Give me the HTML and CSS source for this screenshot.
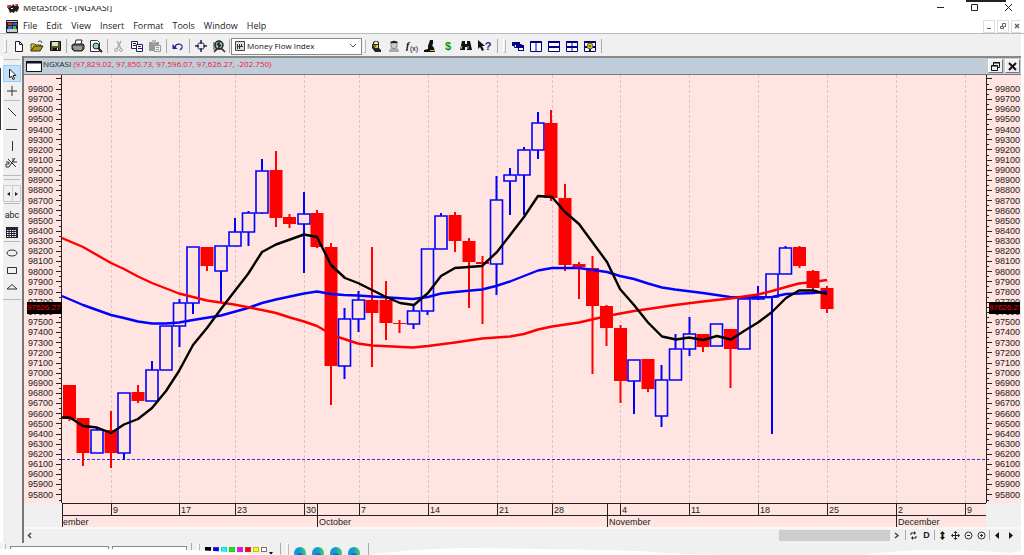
FILE: index.html
```html
<!DOCTYPE html>
<html lang="en">
<head>
<meta charset="utf-8">
<title>MetaStock - [NGXASI]</title>
<link rel="stylesheet" href="styles.css">
</head>
<body>
<div class="app">
  <header class="titlebar">
    <svg class="app-icon" width="12" height="11" viewBox="0 0 12 11"><path d="M0 4l3-2 2 1 1-2 2 2 3-1 1 3-2 4-2-1-1 2-2-1-2 1-1-3z" fill="#1d1d1d"/><path d="M0 2h3l1 2-3 1zM8 1h3v2H9z" fill="#d33"/><path d="M4 5h2v1H4z" fill="#eee"/></svg>
    <h1 class="title"><span>MetaStock - [NGXASI]</span></h1>
    <div class="window-buttons">
      <button aria-label="Minimize"><svg width="9" height="9"><path d="M1 4.500h7" stroke="#222"/></svg></button>
      <button aria-label="Maximize"><svg width="9" height="9"><path d="M1.500 1.500h6v6h-6z" fill="none" stroke="#222"/></svg></button>
      <button aria-label="Close"><svg width="9" height="9"><path d="M1 1l7 7M8 1l-7 7" stroke="#222"/></svg></button>
    </div>
  </header>
  <nav class="menubar">
    <svg class="doc-icon" width="12" height="13" viewBox="0 0 12 13"><path d="M.5.5h11v12H.5z" fill="#ccc" stroke="#222"/><path d="M1 2h10v7H1z" fill="#223"/><path d="M2 3h4v2H2z" fill="#d33"/><path d="M7 3h4v2H7z" fill="#35f"/><path d="M2 6h4v3H2z" fill="#36d"/><path d="M7 6h3v3H7z" fill="#3b3"/></svg>
    <a href="#">File</a><a href="#">Edit</a><a href="#">View</a><a href="#">Insert</a><a href="#">Format</a><a href="#">Tools</a><a href="#">Window</a><a href="#">Help</a>
    <div class="child-buttons">
      <button aria-label="Minimize chart"><svg width="10" height="10"><path d="M3 7.500h4" stroke="#567" stroke-width="1"/></svg></button>
      <button aria-label="Restore chart"><svg width="10" height="10"><path d="M2.500 5.500h3v2h-3zM4.500 5V2.500h3v3H6" fill="none" stroke="#567"/></svg></button>
      <button class="cut" aria-label="Close chart"><svg width="10" height="10"><path d="M3 3l4 4M7 3L3 7" stroke="#567" stroke-width="1.500"/></svg></button>
    </div>
  </nav>
  <div class="toolbar" role="toolbar" aria-label="Standard">
    <i class="grip"></i>
    <button aria-label="New"><svg width="14" height="14"><path d="M3.500 2.500h4l3 3v7h-7zM7.500 2.500v3h3" fill="#fff" stroke="#222"/></svg></button>
    <button aria-label="Open"><svg width="14" height="14"><path d="M1 5h4l1 1h5v2H5l-4 4z" fill="#e8d820" stroke="#443"/><path d="M1 12l3-5h9l-3 5z" fill="#a8960f" stroke="#332"/><path d="M8 3c2-2 3-1 4 1" fill="none" stroke="#222"/></svg></button>
    <button aria-label="Save"><svg width="14" height="14"><path d="M2.500 2.500h10v9h-10z" fill="#55551c" stroke="#111"/><path d="M4 3h6v4H4z" fill="#ddd"/><path d="M5 9h6v3H5z" fill="#111"/><path d="M9 9h1v2H9z" fill="#eee"/></svg></button>
    <i class="sep"></i>
    <button aria-label="Print"><svg width="14" height="14"><path d="M4 5l1-4h6l-1 4" fill="#fff" stroke="#222"/><path d="M1 6l2-1h9l1 1v4l-2 2H3l-2-2z" fill="#555" stroke="#222"/><path d="M2 8h9M3 10h7" stroke="#ddd"/><path d="M9 10h2" stroke="#cc2"/></svg></button>
    <button aria-label="Print preview"><svg width="14" height="14"><path d="M1.500 1.500h7l2 2v9h-9z" fill="#fff" stroke="#333"/><circle cx="7" cy="7" r="3" fill="#9cc" stroke="#222"/><path d="M9 9l4 4" stroke="#222" stroke-width="2"/></svg></button>
    <i class="sep"></i>
    <button aria-label="Cut" disabled><svg width="14" height="14"><path d="M5 2l4 8M9 2L5 10" stroke="#aaa" stroke-width="1.500"/><circle cx="4" cy="11" r="1.500" fill="none" stroke="#aaa"/><circle cx="9" cy="11" r="1.500" fill="none" stroke="#aaa"/></svg></button>
    <button aria-label="Copy"><svg width="14" height="14"><path d="M1.500 2.500h6v7h-6z" fill="#fff" stroke="#224"/><path d="M3 4.500h3M3 6.500h3" stroke="#224"/><path d="M6.500 5.500h6v7h-6z" fill="#fff" stroke="#226"/><path d="M8 7.500h3M8 9.500h4" stroke="#224"/></svg></button>
    <button aria-label="Paste" disabled><svg width="14" height="14"><path d="M1 3h10v9H1z" fill="#999"/><path d="M4 1h4v3H4z" fill="#bbb"/><path d="M6.500 6.500h6v6h-6z" fill="#eee" stroke="#999"/><path d="M8 8.500h3M8 10.500h3" stroke="#999"/></svg></button>
    <i class="sep"></i>
    <button aria-label="Undo"><svg width="14" height="14"><path d="M4 8c1-4 8-4 7 1l-2 2" fill="none" stroke="#229" stroke-width="1.200"/><path d="M1.500 5v5h5z" fill="#229"/></svg></button>
    <i class="sep"></i>
    <button aria-label="Crosshair"><svg width="14" height="14"><circle cx="7" cy="7" r="3.500" fill="none" stroke="#225"/><path d="M7 1v4M7 9v4M1 7h4M9 7h4" stroke="#225" stroke-width="1.500"/></svg></button>
    <button aria-label="Zoom chart"><svg width="14" height="14"><path d="M1 3h9v8H1z" fill="#999"/><circle cx="7" cy="6" r="4" fill="#9bb" stroke="#222" stroke-width="1.500"/><path d="M5 6l2-2v4l2-2M9 9l4 4M2 13l3-3" fill="none" stroke="#222" stroke-width="1.500"/></svg></button>
    <i class="sep thin"></i>
    <div class="picker">
      <svg width="10" height="10"><path d="M.5.5h9v9h-9z" fill="#ddd" stroke="#444"/><path d="M2.500 3v5M4.500 3v5M6.500 3v3M2 5.500h6" stroke="#333"/></svg>
      <label class="sr" for="indicator">Indicator</label>
      <select id="indicator"><option>Money Flow Index</option></select>
      <svg class="chevron" width="8" height="6"><path d="M1 1l3 3 3-3" fill="none" stroke="#555"/></svg>
    </div>
    <i class="grip tight"></i>
    <button aria-label="Explorer"><svg width="14" height="14"><path d="M4 4c0-3 6-3 6 0v5l2 2v2H6L3 9V6z" fill="#222"/><path d="M5 4c1-2 3-2 4 0v1H5z" fill="#eee"/><path d="M4 6h5v3H6z" fill="#dc2"/><path d="M5 7h2" stroke="#222"/></svg></button>
    <button aria-label="Expert advisor"><svg width="14" height="14"><path d="M2 13c0-4 2-4 5-4s5 0 5 4z" fill="#aaa"/><path d="M4 4h6v4l-3 2-3-2z" fill="#ccc" stroke="#888"/><path d="M3 4c1-3 7-3 8 0z" fill="#223"/></svg></button>
    <button aria-label="Indicator builder"><svg width="14" height="14"><text x="1" y="10" class="fx">f</text><text x="5" y="12" class="fx-sub">(x)</text></svg></button>
    <button aria-label="System tester"><svg width="14" height="14"><path d="M7 1h3v4l-1 1 2 3 1 4H1v-2l4-1V7z" fill="#111"/><path d="M7 11h5v1H7z" fill="#db2"/></svg></button>
    <button class="dollar" aria-label="Option scope">$</button>
    <button aria-label="Find"><svg width="14" height="14"><path d="M3 2h3v3h2V2h3l2 9H8V8H6v3H1z" fill="#111"/><path d="M3 7l-1 3M9 7v3" stroke="#aaa"/></svg></button>
    <button class="help" aria-label="Help pointer"><svg width="8" height="14"><path d="M1 1v9l2-2 2 4 2-1-2-4h3z" fill="#111"/></svg>?</button>
    <i class="space"></i>
    <i class="sep"></i>
    <i class="grip"></i>
    <button aria-label="Cascade"><svg width="14" height="14"><path d="M1 3h8v4H1z" fill="#008"/><path d="M3.500 5.500h7v3h-7z" fill="#fff" stroke="#008"/><path d="M5 6h8v6H7V9H5z" fill="#008"/><path d="M8 9h4v2H8z" fill="#fff"/></svg></button>
    <button aria-label="Tile vertically"><svg width="14" height="14"><path d="M1.500 2.500h11v10h-11zM7 3v9" fill="#fff" stroke="#008"/><path d="M1 3h12" stroke="#008" stroke-width="2"/></svg></button>
    <button aria-label="Tile horizontally"><svg width="14" height="14"><path d="M1.500 2.500h11v10h-11z" fill="#fff" stroke="#008"/><path d="M1 3h12M1 8h12" stroke="#008" stroke-width="2"/></svg></button>
    <button aria-label="Tile"><svg width="14" height="14"><path d="M1.500 2.500h11v10h-11zM7 3v9" fill="#fff" stroke="#008"/><path d="M1 3h12M1 8h12" stroke="#008" stroke-width="2"/></svg></button>
    <button aria-label="Layout options"><svg width="14" height="14"><path d="M1.500 2.500h11v10h-11z" fill="#fff" stroke="#008"/><path d="M1 3h12M1 8h12M7 3v9" stroke="#008" stroke-width="2"/><circle cx="7" cy="7" r="3" fill="#cc0" stroke="#660"/><circle cx="7" cy="7" r="1" fill="#553"/></svg></button>
    <i class="sep"></i>
  </div>

  <div class="workspace">
    <aside class="tools" role="toolbar" aria-label="Drawing tools">
      <i class="hr top"></i>
      <button class="active" aria-label="Select"><svg width="14" height="14"><path d="M4.500 2v9l2-2 1.500 3.500 1.500-.7L8 8.500h3z" fill="#fff" stroke="#222"/></svg></button>
      <button aria-label="Cross"><svg width="14" height="14"><path d="M7 2v10M2 7h10" stroke="#333"/></svg></button>
      <i class="hr"></i>
      <button aria-label="Trend line"><svg width="14" height="14"><path d="M3 3l8 8" stroke="#333"/></svg></button>
      <button aria-label="Horizontal line"><svg width="14" height="14"><path d="M1 7.500h11" stroke="#333"/></svg></button>
      <button aria-label="Vertical line"><svg width="14" height="14"><path d="M7.500 2v10" stroke="#333"/></svg></button>
      <button aria-label="Line studies"><svg width="14" height="14"><path d="M3 3l8 8M10 2L4 11M1 6h3v2H1v3h3M8 2v4h4" fill="none" stroke="#333"/></svg></button>
      <i class="hr wide"></i>
      <i class="hr top"></i>
      <div class="nav-pair"><button aria-label="Previous"><svg width="7" height="12"><path d="M5 4v4L2 6z" fill="#222"/></svg></button><button aria-label="Next"><svg width="7" height="12"><path d="M2 4v4l3-2z" fill="#222"/></svg></button></div>
      <i class="hr"></i>
      <button class="abc" aria-label="Text">abc</button>
      <button aria-label="Grid"><svg width="14" height="14"><path d="M1 2h12v11H1z" fill="#223"/><path d="M2 5.500h10M2 7.500h10M2 9.500h10M2 11.500h10" stroke="#fff" stroke-dasharray="1.500 1"/></svg></button>
      <i class="hr"></i>
      <button aria-label="Ellipse"><svg width="14" height="14"><ellipse cx="7" cy="7" rx="5" ry="3" fill="none" stroke="#333"/></svg></button>
      <button aria-label="Rectangle"><svg width="14" height="14"><path d="M2.500 4.500h9v6h-9z" fill="none" stroke="#333"/></svg></button>
      <button aria-label="Triangle"><svg width="14" height="14"><path d="M7 4.500l5 4.500H2z" fill="none" stroke="#333"/></svg></button>
      <i class="hr wide"></i>
    </aside>

    <main class="chart-window">
      <div class="chart-title">
        <svg width="16" height="11"><path d="M.5.5h15v10H.5z" fill="#fff" stroke="#111"/><path d="M0 1.500h16" stroke="#111" stroke-width="2"/></svg>
        <span>NGXASI <b>(97,829.02, 97,850.73, 97,596.07, 97,626.27, -202.750)</b></span>
        <div class="chart-buttons">
          <button aria-label="Restore"><svg width="11" height="11"><path d="M3.500 4V1.500h6v5H8M1.500 4.500h6v5h-6z" fill="none" stroke="#111"/><path d="M3 2h7M1 5h7" stroke="#111" stroke-width="1"/></svg></button>
          <button aria-label="Close"><svg width="11" height="11"><path d="M2 2l7 7M9 2L2 9" stroke="#111" stroke-width="2"/></svg></button>
        </div>
      </div>
      <div class="chart">
        <div class="axis left">
          <ol class="prices"></ol>
          <svg class="ticks" viewBox="0 0 7 428" preserveAspectRatio="none"></svg>
          <output class="last-price">97626.27</output>
        </div>
        <svg class="plot" viewBox="62 75 924 428" preserveAspectRatio="none" role="img" aria-label="NGXASI daily candlesticks with three moving averages"></svg>
        <div class="axis right">
          <svg class="ticks" viewBox="0 0 7 428" preserveAspectRatio="none"></svg>
          <ol class="prices"></ol>
          <output class="last-price">97626.27</output>
        </div>
      </div>
      <div class="dates">
        <div class="days"><span></span><span>9</span><span>17</span><span>23</span><span>30</span><span></span><span>7</span><span>14</span><span>21</span><span>28</span><span></span><span>4</span><span>11</span><span>18</span><span>25</span><span>2</span><span>9</span></div>
        <div class="months"><span>ember</span><span>October</span><span>November</span><span>December</span></div>
      </div>
      <div class="scroller">
        <button class="back" aria-label="Scroll left"><svg width="7" height="9"><path d="M5 2L2.500 4.500 5 7" fill="none" stroke="#444" stroke-width="1.500"/></svg></button>
        <div class="track"><div class="thumb"></div></div>
        <button aria-label="Scroll right"><svg width="9" height="9"><path d="M2 2l3 2.500L2 7" fill="none" stroke="#444" stroke-width="1.500"/></svg></button>
        <i class="sep"></i>
        <button aria-label="Refresh"><svg width="9" height="9"><path d="M2 4V2h4M7 5v2H3" fill="none" stroke="#222"/><path d="M5 0v4l2-2zM4 5v4L2 7z" fill="#222"/></svg></button>
        <button class="period" aria-label="Daily">D</button>
        <i class="sep"></i>
        <button aria-label="Fit vertically"><svg width="9" height="9"><path d="M4.500 0L7 3H5.500v3H7L4.500 9 2 6h1.500V3H2z" fill="#111"/></svg></button>
        <button aria-label="Move"><svg width="9" height="9"><path d="M4.500 1v7M1 4.500h7" stroke="#222"/><path d="M4.500 0l2 2h-4zM4.500 9l2-2h-4zM0 4.500l2-2v4zM9 4.500l-2-2v4z" fill="#222"/></svg></button>
        <button aria-label="Zoom out"><svg width="9" height="9"><circle cx="4.500" cy="4.500" r="3.500" fill="none" stroke="#333"/><path d="M3 4.500h3" stroke="#222"/></svg></button>
        <button aria-label="Zoom in"><svg width="9" height="9"><circle cx="4.500" cy="4.500" r="3.500" fill="none" stroke="#333"/><path d="M3 4.500h3M4.500 3v3" stroke="#222"/></svg></button>
        <i class="sep"></i>
        <button aria-label="Previous security"><svg width="9" height="9"><path d="M6 1v7L2 4.500z" fill="#111"/></svg></button>
        <button aria-label="Next security"><svg width="9" height="9"><path d="M3 1v7l4-3.500z" fill="#111"/></svg></button>
      </div>
    </main>
  </div>

  <footer class="bottombar">
    <i class="grip"></i>
    <input class="wide" aria-label="Symbol"><input aria-label="Line style">
    <i class="sep"></i><i class="grip"></i>
    <div class="swatches">
      <button class="black" aria-label="Black"></button><button class="blue" aria-label="Blue"></button><button class="cyan" aria-label="Cyan"></button><button class="green" aria-label="Green"></button><button class="magenta" aria-label="Magenta"></button><button class="red" aria-label="Red"></button><button class="yellow" aria-label="Yellow"></button><button class="white" aria-label="White"></button>
    </div>
    <svg class="more" width="4" height="3"><path d="M0 0h4L2 3z" fill="#111"/></svg>
    <i class="sep"></i><i class="grip"></i>
    <div class="links"><a href="#" aria-label="Web link 1"></a><a href="#" aria-label="Web link 2"></a><a href="#" aria-label="Web link 3"></a><a href="#" aria-label="Web link 4"></a></div>
    <i class="sep"></i>
    <svg class="torn" viewBox="0 0 1024 12" preserveAspectRatio="none"><path d="M0 6H150Q220 7 250 11L300 12H370Q410 6 470 5Q560 6 640 8Q690 12 740 12H866Q880 9 925 7Q980 7 1014 10L1024 8V12H0z" fill="#fff"/></svg>
  </footer>
</div>
<script src="chart.js"></script>
</body>
</html>
```

FILE: styles.css
```css
* { box-sizing: border-box; }

body {
  margin: 0;
  background: #fff;
  color: #222;
  font: 9px/12px "Open Sans", "Noto Sans", sans-serif;
}

button {
  display: flex;
  align-items: center;
  justify-content: center;
  padding: 0;
  border: 0;
  background: none;
  color: inherit;
  font: inherit;
}

svg { display: block; flex: none; }

.app {
  display: flex;
  flex-direction: column;
  height: 100vh;
  overflow: hidden;
}

/* title and menu */
.titlebar {
  display: flex;
  flex: none;
  align-items: flex-start;
  height: 17px;
  padding-left: 7px;
  background: linear-gradient(#222, #222) right 18px top 0 / 40px 2px no-repeat;
}
.app-icon { margin-top: 3px; }
.title {
  display: flex;
  align-items: flex-end;
  height: 8px;
  margin: 6px 0 0 4px;
  overflow: hidden;
  font-size: 9px;
  font-weight: 400;
  line-height: 12px;
}
.window-buttons {
  display: flex;
  gap: 25px;
  margin: 0 11px 0 auto;
}
.window-buttons button { padding-top: 3px; }
.menubar {
  display: flex;
  flex: none;
  align-items: center;
  gap: 9px;
  height: 17px;
  padding: 2px 3px 0 6px;
  border-bottom: 1px solid #bbb;
}
.doc-icon { margin-right: -4px; }
.menubar a { color: #222; text-decoration: none; }
.child-buttons { display: flex; gap: 2px; margin-left: auto; }
.child-buttons button { width: 12px; height: 13px; border: 1px solid #ddd; overflow: hidden; }
.child-buttons .cut { width: 10px; border-right: 0; }

/* toolbar */
.toolbar {
  display: flex;
  flex: none;
  align-items: center;
  height: 22px;
  margin-right: 3px;
  padding: 2px 0 0 1px;
  background: #f0f0f0;
}
.toolbar button { width: 18px; height: 18px; flex: none; }
.grip {
  flex: none;
  width: 3px;
  height: 14px;
  margin: 0 3px;
  border: 1px solid;
  border-color: #fff #bbb #bbb #fff;
}
.grip.tight { margin: 0 1px; }
.sep { flex: none; width: 1px; height: 14px; margin: 0 2px; background: #aaa; }
.sep.thin { margin: 0 1px; }
.space { width: 2px; }
.picker {
  display: flex;
  align-items: center;
  gap: 2px;
  width: 131px;
  height: 17px;
  padding: 0 4px 0 3px;
  border: 1px solid #888;
  background: #fff;
}
.picker select {
  flex: 1;
  min-width: 0;
  height: 12px;
  padding: 0;
  border: 0;
  appearance: none;
  background: none;
  color: #111;
  font: inherit;
  font-size: 8px;
}
.sr { position: absolute; width: 1px; height: 1px; overflow: hidden; clip-path: inset(50%); }
.toolbar .dollar { color: #090; font: bold 11px "Liberation Sans", sans-serif; }
.toolbar .help { color: #228; font: bold 11px "Liberation Sans", sans-serif; }
.fx { font: italic bold 10px "Liberation Serif", serif; }
.fx-sub { font: 7px "Liberation Sans", sans-serif; }

/* drawing tools */
.workspace {
  display: flex;
  flex: 1;
  min-height: 0;
  margin-right: 3px;
}
.tools {
  display: flex;
  flex: none;
  flex-direction: column;
  align-items: center;
  width: 24px;
  padding: 0 1px 0 3px;
  border-right: 2px solid #777;
  background:
    linear-gradient(#333, #333) 0 12px / 1px 62px no-repeat,
    linear-gradient(90deg, #fff 3px, #f0f0f0 3px);
}
.tools > button { flex: none; width: 18px; height: 17px; }
.tools .active { background: #c5e0f7; border: 1px solid #9cf; }
.hr { flex: none; width: 16px; height: 1px; margin: 1px 0 2px; background: #bbb; }
.hr.top { margin: 3px 0 5px; }
.hr.wide { align-self: stretch; width: auto; margin: 4px 0 0; }
.nav-pair { display: flex; flex: none; border: 1px solid #ccc; }
.nav-pair button { width: 8px; height: 15px; }
.nav-pair button + button { border-left: 1px solid #ccc; }
.tools .abc { font: 9px/12px Roboto, sans-serif; }

/* chart window */
.chart-window {
  display: flex;
  flex: 1;
  flex-direction: column;
  min-width: 0;
  border-top: 2px solid #888;
  background: #f0f0f0;
}
.chart-title {
  display: flex;
  flex: none;
  align-items: center;
  gap: 1px;
  height: 17px;
  padding: 0 1px 0 2px;
  border-bottom: 1px solid #777;
  background: #bfccda;
  font-size: 8px;
}
.chart-title span { align-self: flex-start; }
.chart-title b { color: #f0202c; font-weight: 400; }
.chart-buttons { display: flex; gap: 2px; margin-left: auto; }
.chart-buttons button { width: 15px; height: 14px; border: 1px solid; border-color: #fff #777 #777 #fff; background: #f0f0f0; }
.chart {
  display: flex;
  flex: 1;
  min-height: 0;
  background: #ffe4e1;
  font-family: "Liberation Sans", Arial, sans-serif;
}
.axis { position: relative; display: flex; flex: none; width: 38px; }
.axis.right { width: 35px; }
.prices {
  display: flex;
  flex: 1;
  flex-direction: column;
  min-width: 0;
  margin: 0;
  padding: 9px 0 3px 4px;
  list-style: none;
}
.right .prices { padding-left: 2px; }
.prices li { flex: 1; min-height: 0; line-height: 10px; }
.ticks { width: 7px; height: 100%; }
.ticks path, .plot path, .plot polyline { fill: none; vector-effect: non-scaling-stroke; }
.ticks path { stroke: #222; shape-rendering: crispEdges; }
.last-price {
  position: absolute;
  top: 53%;
  left: 3px;
  width: 35px;
  height: 12px;
  overflow: hidden;
  background: #000;
  color: #f00;
  font-size: 8px;
  line-height: 12px;
}
.right .last-price { width: 31px; }
.plot { flex: 1; min-width: 0; height: 100%; }
.plot .grid { stroke: #d3c8c4; stroke-dasharray: 3 2; }
.plot .level { stroke: #33d; stroke-dasharray: 3 2; }
.up { stroke: #00f; stroke-width: 2; }
.down { stroke: #f00; stroke-width: 2; }
.plot .down-body { fill: #f00; }
.up-body { fill: #ffe4e1; stroke: #00f; stroke-width: 1.600; vector-effect: non-scaling-stroke; }
.average { stroke-width: 2.400; stroke-linejoin: round; }
.slow { stroke: #f00; }
.medium { stroke: #00f; }
.fast { stroke: #000; }

/* date axis */
.dates {
  flex: none;
  margin: 0 35px 0 38px;
  background: #ffe4e1;
  font-family: "Liberation Sans", Arial, sans-serif;
}
.days, .months { display: grid; height: 12px; line-height: 12px; border-top: 1px solid #222; }
.days { grid-template-columns: minmax(0, 49fr) minmax(0, 68fr) minmax(0, 56fr) minmax(0, 69fr) minmax(0, 13fr) minmax(0, 42fr) minmax(0, 69fr) minmax(0, 69fr) minmax(0, 55fr) minmax(0, 55fr) minmax(0, 13fr) minmax(0, 69fr) minmax(0, 69fr) minmax(0, 69fr) minmax(0, 69fr) minmax(0, 69fr) minmax(0, 21fr); }
.months { grid-template-columns: 255fr 290fr 289fr 90fr; }
.days span, .months span { padding-left: 1px; border-left: 1px solid #222; }
.months span:first-child, .days span:first-child { padding-left: 0; }

/* scroll row */
.scroller {
  display: flex;
  flex: none;
  align-items: center;
  gap: 2px;
  height: 16px;
  padding: 0 5px 2px 0;
  border-top: 2px solid #f8f8f8;
}
.scroller button { width: 11px; height: 11px; }
.scroller .sep { height: 10px; margin: 0; }
.scroller .period { font: bold 9px/11px "Liberation Sans", sans-serif; }
.track { flex: 1; height: 11px; }
.thumb { width: 13%; height: 100%; margin-left: auto; background: #cdcdcd; }

/* bottom bar */
.bottombar {
  position: relative;
  display: flex;
  flex: none;
  align-items: flex-start;
  height: 12px;
  margin-right: 3px;
  overflow: hidden;
  background: #f0f0f0;
}
.bottombar input { width: 75px; height: 14px; margin: 3px 0 0 3px; border: 1px solid #888; background: #fff; }
.bottombar .wide { width: 99px; margin-left: 1px; }
.bottombar .sep { margin-left: 4px; }
.swatches { display: flex; gap: 2px; margin: 4px 0 0 2px; }
.swatches button { width: 6px; height: 5px; border: 1px solid #777; }
.swatches .black { background: #000; border-color: #000; }
.swatches .blue { background: #00f; border-color: #33a; }
.swatches .cyan { background: #0ff; border-color: #3cc; }
.swatches .green { background: #0f0; border-color: #3b3; }
.swatches .magenta { background: #f0f; border-color: #b3b; }
.swatches .red { background: #f00; border-color: #b33; }
.swatches .yellow { background: #ff0; border-color: #bb3; }
.swatches .white { background: #fff; }
.more { margin: 9px 3px 0 2px; }
.links { display: flex; gap: 6px; margin: 4px 4px 0 2px; }
.links a { width: 12px; height: 12px; border-radius: 50%; background: radial-gradient(circle at 50% 80%, #1673b8 30%, transparent 32%), linear-gradient(90deg, #1298d8 40%, #45d060); }
.torn { position: absolute; inset: 0; width: 100%; height: 100%; z-index: 1; }
```

FILE: chart.js
```js
// x, direction, body top, body bottom, wick top, wick bottom
const candles = [
  [69.5, "d", 385, 419, 385, 421], [83, "d", 418, 453, 418, 466], [97, "u", 430, 453, 427, 453],
  [111, "d", 430, 453, 411, 468], [124, "u", 393, 453, 393, 460], [138, "d", 392, 401, 385, 403],
  [152, "u", 370, 401, 361, 401], [166, "u", 326, 370, 326, 370], [179.5, "u", 303, 326, 299, 347],
  [193, "u", 247, 303, 247, 314], [207, "d", 247, 266, 247, 271], [221, "u", 246, 271, 246, 302],
  [235, "u", 232, 246, 218, 246], [248.5, "u", 213, 232, 211, 246], [262, "u", 171, 213, 159, 214],
  [276, "d", 170, 218, 151, 227], [289.5, "d", 217, 224, 214, 228], [304, "u", 214, 224, 192, 273],
  [317, "d", 213, 247, 210, 248], [331, "d", 247, 366, 243, 405], [344.5, "u", 319, 366, 308, 379],
  [358.5, "u", 300, 319, 291, 332], [372, "d", 300, 313, 247, 367], [386, "d", 300, 323, 281, 340],
  [399.5, "d", 323, 324, 320, 333], [413.5, "u", 311, 324, 305, 329], [427.5, "u", 249, 311, 249, 315],
  [441, "u", 216, 249, 213, 249], [455, "d", 215, 241, 212, 252], [469, "d", 241, 262, 238, 308],
  [482.5, "d", 262, 264, 256, 324], [496.5, "u", 200, 264, 176, 295], [510, "u", 175, 181, 168, 215],
  [524, "u", 150, 175, 147, 215], [538, "u", 123, 150, 112, 159], [551, "d", 123, 198, 110, 201],
  [565, "d", 198, 265, 184, 271], [579, "d", 264, 267, 262, 299], [592.5, "d", 268, 306, 256, 374],
  [606.5, "d", 306, 328, 305, 346], [620.5, "d", 328, 381, 325, 403], [634, "u", 360, 381, 360, 414],
  [648, "d", 359, 389, 359, 392], [661.5, "u", 380, 416, 365, 427], [675.5, "u", 349, 380, 334, 380],
  [689.5, "u", 334, 349, 317, 356], [703, "d", 334, 347, 334, 352], [716.5, "u", 324, 346, 324, 346],
  [730.5, "d", 329, 349, 329, 388], [744, "u", 299, 349, 299, 349], [758, "u", 297, 299, 286, 300],
  [772, "u", 274, 297, 274, 434], [785.5, "u", 248, 274, 246, 274], [799.5, "d", 247, 266, 246, 268],
  [813, "d", 271, 288, 270, 294], [827, "d", 288, 309, 286, 313]
];

const averages = {
  medium: "62,296 83,305 111,315 124,318 138,321.5 152,323.5 166,323.5 179,322.5 193,320 221,315.5 248,308 262,303 276,299.5 304,293.5 317,291.5 331,294 344,295 358,295.5 372,296.5 413,299 428,297 441,293.5 455,292 482,289.5 496,286 510,281.5 524,276 538,270.5 552,268 579,268 607,272 620,276 634,279 648,283.5 662,287.5 675,289.5 703,293 730,297 758,297.5 772,297 786,294 813,293 827,291.5",
  slow: "62,238 83,247 111,263 124,269 138,276.5 152,283 179,293.5 207,300.5 234,304.5 262,310 276,313 290,317.5 304,321.5 317,326 331,334 338,337 358,343.5 372,345.5 413,347.5 428,346 455,342.5 482,338.5 510,336.5 524,334 538,329.5 552,326.5 579,322.5 607,316 634,311 648,309 675,305 703,301.5 730,298.5 758,294.5 772,291 786,287 799,283.5 813,282 827,280",
  fast: "62,417.5 70,417.5 83,426 97,427.5 111,433 124,424.5 138,419 152,408 166,391 179,371 193,345 207,328 221,309 234,292 248,274 262,252 276,244.5 290,239.5 304,234.5 317,237 331,265 345,278 358,283 372,290 386,297 400,303 414,305 428,293 441,276 455,268 482,266 497,252 524,217 538,196 552,197 565,212 579,224 607,262 620,289 634,305 648,322.5 662,336.5 676,339.5 689,337.5 703,340 717,336 731,339.5 744,331 758,322.5 772,312 786,298 799,290.5 813,290.5 827,294"
};

const gridX = [111.5, 179.5, 235.5, 304.5, 359.5, 428.5, 497.5, 552.5, 620.5, 689.5, 758.5, 827.5, 896.5, 965.5];

let plot = gridX.map(x => `<path class="grid" d="M${x} 75V503"/>`).join("");
plot += '<path class="level" d="M62 459.5H986"/>';
for (const [x, dir, top, bottom, high, low] of candles) {
  if (dir === "d") {
    plot += `<path class="down" d="M${x} ${high}V${low}"/><path class="down-body" d="M${x - 6.5} ${top}h13v${bottom - top}h-13z"/>`;
  } else {
    plot += `<path class="up" d="M${x} ${high}V${top}M${x} ${bottom}V${low}"/><rect class="up-body" x="${x - 6}" y="${top}" width="12" height="${bottom - top}"/>`;
  }
}
for (const name of Object.keys(averages)) {
  plot += `<polyline class="average ${name}" points="${averages[name]}"/>`;
}
document.querySelector(".plot").innerHTML = plot;

let labels = "";
for (let price = 99800; price >= 95800; price -= 100) labels += `<li>${price}</li>`;
document.querySelectorAll(".prices").forEach(list => { list.innerHTML = labels; });

const step = 416 / 41;
document.querySelectorAll(".axis").forEach(axis => {
  const left = axis.classList.contains("left");
  let d = left ? "M6.5 0V428" : "M.5 0V428";
  for (let i = -1; i < 41; i++) {
    const y = 9 + step * (i + 0.5);
    d += left ? `M1 ${y}H7M4 ${y + step / 2}H7` : `M0 ${y}H6M0 ${y + step / 2}H3`;
  }
  axis.querySelector(".ticks").innerHTML = `<path d="${d}"/>`;
});
```
